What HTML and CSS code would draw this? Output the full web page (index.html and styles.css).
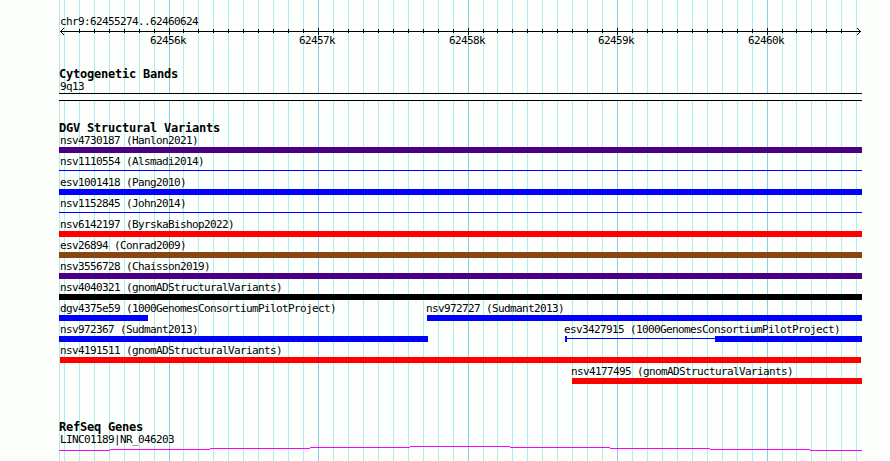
FILE: index.html
```html
<!DOCTYPE html>
<html lang="en">
<head>
    <meta charset="UTF-8">
    <meta name="viewport" content="width=device-width, initial-scale=1.0">
    <title>chr9:62455274..62460624</title>
    <link rel="stylesheet" href="styles.css">
</head>
<body>
    <div class="browser">
        <!-- Vertical guide lines behind all tracks -->
        <svg class="guides" width="890" height="461" shape-rendering="crispEdges">
            <path id="minor" class="minor" />
            <path id="major" class="major" />
        </svg>

        <div class="panel">
            <div class="ruler">
                <div class="label region">chr9:62455274..62460624</div>
                <svg class="axis" width="803" height="9" shape-rendering="crispEdges">
                    <path id="ticks" class="ink" />
                    <path class="ink" d="M1 4h801v1H1z" />
                    <path class="ink" d="M2 3h1v1h-1zM3 2h1v1h-1zM4 1h1v1h-1zM2 5h1v1h-1zM3 6h1v1h-1zM4 7h1v1h-1z" />
                    <path class="ink" d="M800 3h1v1h-1zM799 2h1v1h-1zM798 1h1v1h-1zM800 5h1v1h-1zM799 6h1v1h-1zM798 7h1v1h-1z" />
                </svg>
                <div class="scale">
                    <span class="label">62456k</span>
                    <span class="label">62457k</span>
                    <span class="label">62458k</span>
                    <span class="label">62459k</span>
                    <span class="label">62460k</span>
                </div>
            </div>

            <div class="track cytoband">
                <h2>Cytogenetic Bands</h2>
                <div class="label">9q13</div>
                <div class="band"></div>
            </div>

            <div class="track variants">
                <h2>DGV Structural Variants</h2>
                <div class="row">
                    <div class="feature full"><div class="label">nsv4730187 (Hanlon2021)</div><div class="bar indigo"></div></div>
                </div>
                <div class="row">
                    <div class="feature full"><div class="label">nsv1110554 (Alsmadi2014)</div><div class="bar thin"></div></div>
                </div>
                <div class="row">
                    <div class="feature full"><div class="label">esv1001418 (Pang2010)</div><div class="bar blue"></div></div>
                </div>
                <div class="row">
                    <div class="feature full"><div class="label">nsv1152845 (John2014)</div><div class="bar thin"></div></div>
                </div>
                <div class="row">
                    <div class="feature full"><div class="label">nsv6142197 (ByrskaBishop2022)</div><div class="bar red"></div></div>
                </div>
                <div class="row">
                    <div class="feature full"><div class="label">esv26894 (Conrad2009)</div><div class="bar brown"></div></div>
                </div>
                <div class="row">
                    <div class="feature full"><div class="label">nsv3556728 (Chaisson2019)</div><div class="bar indigo"></div></div>
                </div>
                <div class="row">
                    <div class="feature full"><div class="label">nsv4040321 (gnomADStructuralVariants)</div><div class="bar black"></div></div>
                </div>
                <div class="row">
                    <div class="feature" style="width: 89px"><div class="label">dgv4375e59 (1000GenomesConsortiumPilotProject)</div><div class="bar blue"></div></div>
                    <div class="feature inner" style="width: 435px"><div class="label">nsv972727 (Sudmant2013)</div><div class="bar blue"></div></div>
                </div>
                <div class="row">
                    <div class="feature" style="width: 369px"><div class="label">nsv972367 (Sudmant2013)</div><div class="bar blue"></div></div>
                    <div class="feature inner" style="width: 297px">
                        <div class="label">esv3427915 (1000GenomesConsortiumPilotProject)</div>
                        <div class="split">
                            <div class="bar blue" style="width: 2px"></div>
                            <div class="bar thin connector"></div>
                            <div class="bar blue" style="width: 147px"></div>
                        </div>
                    </div>
                </div>
                <div class="row inset">
                    <div class="feature flush full"><div class="label">nsv4191511 (gnomADStructuralVariants)</div><div class="bar red"></div></div>
                </div>
                <div class="row">
                    <div class="feature inner" style="width: 290px"><div class="label">nsv4177495 (gnomADStructuralVariants)</div><div class="bar red"></div></div>
                </div>
            </div>

            <div class="track genes">
                <h2>RefSeq Genes</h2>
                <div class="label">LINC01189|NR_046203</div>
                <svg class="gene" width="803" height="5" shape-rendering="crispEdges">
                    <path d="M0 4h51v1H0zM51 3h100v1H51zM151 2h100v1H151zM251 1h100v1H251zM351 0h100v1H351zM451 1h100v1H451zM551 2h100v1H551zM651 3h100v1H651zM751 4h52v1H751z" />
                </svg>
            </div>
        </div>
    </div>

    <script>
        // One guide every 100 bp, heavier every 1000 bp
        const left = 59;
        const majors = [169, 318, 468, 617, 767];
        const minors = [59, 64, 79, 94, 109, 124, 139, 154,
            183, 198, 213, 228, 243, 258, 273, 288, 303,
            333, 348, 363, 378, 393, 408, 423, 438, 453,
            483, 497, 512, 527, 542, 557, 572, 587, 602,
            632, 647, 662, 677, 692, 707, 722, 737, 752,
            782, 796, 811, 826, 841, 856];

        const line = (x, y, h) => `M${x} ${y}h1v${h}h-1z`;

        document.getElementById('minor').setAttribute('d', minors.map(x => line(x, 0, 461)).join(''));
        document.getElementById('major').setAttribute('d', majors.map(x => line(x, 0, 461)).join(''));
        document.getElementById('ticks').setAttribute('d',
            minors.filter(x => x > 64 && x < 856).map(x => line(x - left, 2, 4)).join('') +
            majors.map(x => line(x - left, 1, 7)).join(''));
    </script>
</body>
</html>
```
FILE: styles.css
```css
body {
    margin: 0;
    background-color: #fdfffc;
    color: #000;
    font-family: "DejaVu Sans Mono", monospace;
    font-size: 11px;
    overflow: hidden;
}

svg {
    display: block;
}

.browser {
    position: relative;
    height: 461px;
}

/* Guide lines sit under the tracks */
.guides {
    position: absolute;
    top: 0;
    left: 0;
}

.minor {
    fill: #afeeee;
}

.major {
    fill: #87ceeb;
}

.ink {
    fill: #000;
}

.panel {
    position: relative;
    width: 803px;
    margin-left: 59px;
    padding-top: 13px;
}

.label {
    height: 15px;
    padding-left: 1px;
    line-height: 17px;
    letter-spacing: -0.622px;
    white-space: nowrap;
}

h2 {
    height: 12px;
    margin: 0;
    font-size: 12px;
    line-height: 13px;
    letter-spacing: -0.224px;
    white-space: nowrap;
}

/* Ruler */
.ruler {
    height: 55px;
}

.region {
    height: 14px;
}

.scale {
    display: grid;
    grid-template-columns: 149px 150px 149px 150px auto;
    margin-top: -4px;
    padding-left: 90px;
}

/* Tracks */
.cytoband {
    height: 54px;
}

.cytoband .label,
.genes .label {
    height: 13px;
    line-height: 13px;
}

.band {
    height: 6px;
    background-color: #fdfffc;
    border-top: 1px solid #000;
    border-bottom: 1px solid #000;
}

.variants {
    height: 299px;
}

.variants h2 {
    height: 10px;
}

.row {
    display: flex;
    justify-content: space-between;
    height: 21px;
}

.row.inset {
    padding: 0 1px;
}

.full {
    width: 100%;
}

.inner {
    margin-left: auto;
}

.inner .label {
    margin-left: -1px;
    padding-left: 0;
}

.flush .label {
    padding-left: 0;
}

.bar {
    height: 6px;
}

.split {
    display: flex;
}

.connector {
    flex: 1;
}

.indigo {
    background-color: #4b0082;
}

.blue {
    background-color: #0000ff;
}

.red {
    background-color: #ff0000;
}

.brown {
    background-color: #8b4513;
}

.black {
    background-color: #000;
}

.bar.thin {
    height: 1px;
    margin-top: 2px;
    background-color: #0000ff;
}

/* Genes */
.gene {
    fill: #ff00ff;
}
```
